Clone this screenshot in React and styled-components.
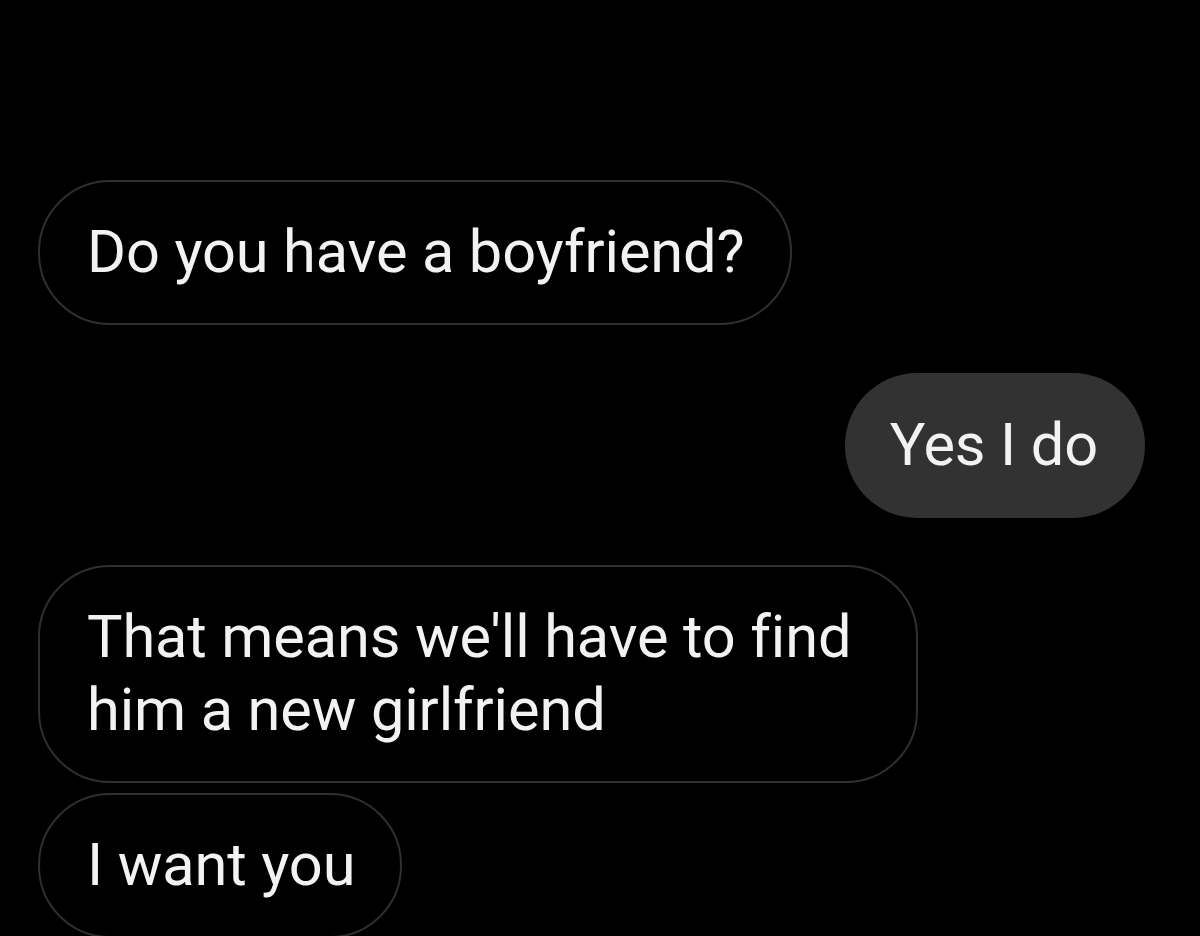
import React from "react";
import styled, { createGlobalStyle } from "styled-components";

const GlobalStyle = createGlobalStyle`
  html, body {
    margin: 0;
    padding: 0;
    background: #000;
    overflow: hidden;
  }
`;

const Thread = styled.main`
  width: 1200px;
  height: 936px;
  box-sizing: border-box;
  padding: 180px 55px 0 38px;
  display: flex;
  flex-direction: column;
  align-items: flex-start;
  background: #000;
  font-family: Roboto, "Noto Sans", "Liberation Sans", sans-serif;
`;

const Bubble = styled.div`
  box-sizing: border-box;
  max-width: 880px;
  margin-top: ${(p) => p.$gap || 0}px;
  padding: ${(p) => (p.$mine ? "36px 47px 36px 45px" : "34px 45px 34px 47px")};
  border-radius: 72px;
  border: ${(p) => (p.$mine ? "none" : "2px solid #2f2f2f")};
  background: ${(p) => (p.$mine ? "#323232" : "#000")};
  align-self: ${(p) => (p.$mine ? "flex-end" : "flex-start")};
  color: #f2f2f2;
  font-size: 59.5px;
  line-height: 73px;
  letter-spacing: -0.12px;
`;

const messages = [
  { id: 1, text: "Do you have a boyfriend?", gap: 0 },
  { id: 2, text: "Yes I do", mine: true, gap: 48 },
  { id: 3, text: "That means we'll have to find him a new girlfriend", gap: 47 },
  { id: 4, text: "I want you", gap: 10 },
];

export default function App() {
  return (
    <>
      <GlobalStyle />
      <Thread>
        {messages.map((m) => (
          <Bubble key={m.id} $mine={m.mine} $gap={m.gap}>
            {m.text}
          </Bubble>
        ))}
      </Thread>
    </>
  );
}
